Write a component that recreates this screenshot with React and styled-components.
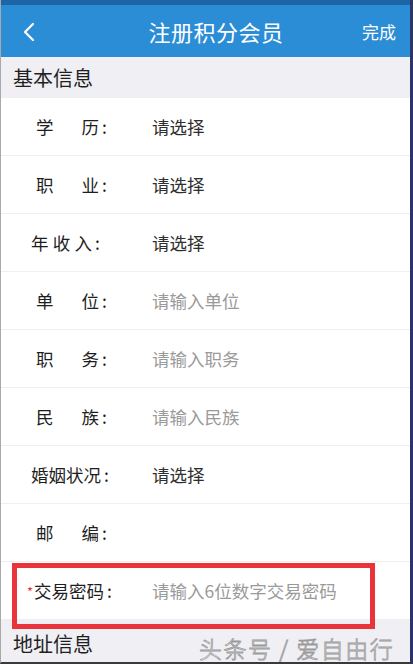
import React from 'react';
import styled, { createGlobalStyle } from 'styled-components';

const GlobalStyle = createGlobalStyle`
  html, body {
    margin: 0;
    padding: 0;
    background: #ffffff;
  }
  body {
    font-family: "Noto Sans CJK SC", "Noto Sans", sans-serif;
  }
`;

const rows = [
  { label: ['学', '历'], value: '请选择' },
  { label: ['职', '业'], value: '请选择' },
  { label: ['年', '收', '入'], value: '请选择' },
  { label: ['单', '位'], placeholder: '请输入单位' },
  { label: ['职', '务'], placeholder: '请输入职务' },
  { label: ['民', '族'], placeholder: '请输入民族' },
  { label: ['婚姻状况'], value: '请选择' },
  { label: ['邮', '编'], value: '' },
  { label: ['交易密码'], placeholder: '请输入6位数字交易密码', required: true },
];

function ChevronLeft() {
  return (
    <svg width="14" height="20" viewBox="0 0 14 20">
      <polyline points="11,2 3,10 11,18" fill="none" stroke="#ffffff" strokeWidth="2.2" strokeLinecap="round" strokeLinejoin="round" />
    </svg>
  );
}

export default function App() {
  return (
    <>
      <GlobalStyle />
      <Frame>
        <Header>
          <BackButton><ChevronLeft /></BackButton>
          <Title>注册积分会员</Title>
          <Done>完成</Done>
        </Header>
        <SectionTitle>基本信息</SectionTitle>
        {rows.map((row, i) => (
          <Row key={i}>
            <Label $wide={row.label.length !== 2} $required={row.required}>
              {row.required && <Star>*</Star>}
              <LabelChars $count={row.label.length}>
                {row.label.map((c) => (
                  <span key={c}>{c}</span>
                ))}
              </LabelChars>
              <Colon>:</Colon>
            </Label>
            {row.placeholder ? (
              <Placeholder>{row.placeholder}</Placeholder>
            ) : (
              <Value>{row.value}</Value>
            )}
          </Row>
        ))}
        <SectionTitle $bottom>地址信息</SectionTitle>
        <Highlight />
        <Watermark>头条号 / 爱自由行</Watermark>
      </Frame>
    </>
  );
}

const Frame = styled.div`
  position: relative;
  width: 413px;
  height: 664px;
  overflow: hidden;
  box-sizing: border-box;
  border-left: 1px solid #a9a9ad;
  border-right: 3px solid #2b3568;
  border-bottom: 2px solid #3a3a3a;
  background: #ffffff;
`;

const Header = styled.div`
  height: 52px;
  border-top: 5px solid #1d66a6;
  background: #2b8dd5;
  display: flex;
  align-items: center;
  padding: 0 14px 0 21px;
  color: #ffffff;
`;

const BackButton = styled.div`
  width: 60px;
  display: flex;
  align-items: center;
  padding-top: 2px;
`;

const Title = styled.div`
  flex: 1;
  text-align: center;
  font-size: 22px;
  letter-spacing: 0.5px;
  padding-left: 14px;
`;

const Done = styled.div`
  width: 60px;
  text-align: right;
  font-size: 17px;
`;

const SectionTitle = styled.div`
  height: ${(p) => (p.$bottom ? '44px' : '41px')};
  background: #efeff4;
  display: flex;
  align-items: center;
  padding-left: 12px;
  font-size: 20px;
  color: #1f1f1f;
  padding-top: ${(p) => (p.$bottom ? '2px' : '0')};
  box-sizing: border-box;
`;

const Row = styled.div`
  height: 58px;
  box-sizing: border-box;
  border-bottom: 1px solid #efefef;
  display: flex;
  align-items: center;
  font-size: 17.5px;
`;

const Label = styled.div`
  width: 151px;
  box-sizing: border-box;
  padding-left: ${(p) => (p.$required ? '26px' : p.$wide ? '30px' : '35px')};
  display: flex;
  align-items: center;
  color: #1e1e1e;
`;

const LabelChars = styled.div`
  display: flex;
  justify-content: space-between;
  width: ${(p) => (p.$count === 2 ? '63px' : p.$count === 3 ? '61px' : 'auto')};
`;

const Colon = styled.span`
  margin-left: 3px;
`;

const Star = styled.span`
  color: #e2333a;
  font-size: 13px;
  margin-right: 1px;
  align-self: flex-start;
  margin-top: 4px;
`;

const Value = styled.div`
  color: #2e2e2e;
`;

const Placeholder = styled.div`
  color: #9a9a9a;
`;

const Highlight = styled.div`
  position: absolute;
  left: 11px;
  top: 563px;
  width: 363px;
  height: 66px;
  box-sizing: border-box;
  border: 5px solid #ea343c;
  pointer-events: none;
`;

const Watermark = styled.div`
  position: absolute;
  left: 198px;
  top: 637px;
  font-size: 23px;
  line-height: 23px;
  font-weight: 300;
  color: #ffffff;
  letter-spacing: 1.5px;
  -webkit-text-stroke: 0.8px #9a9a9a;
  white-space: nowrap;
`;
